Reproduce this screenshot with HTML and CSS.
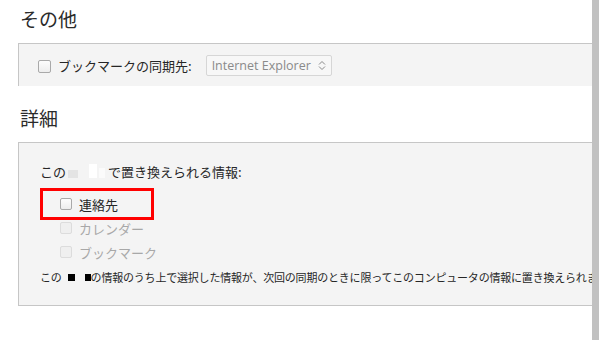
FILE: index.html
```html
<!DOCTYPE html>
<html lang="ja">
<head>
    <meta charset="UTF-8">
    <meta name="viewport" content="width=device-width, initial-scale=1.0">
    <title>同期の設定</title>
    <link rel="stylesheet" href="styles.css">
</head>
<body>
    <div class="page">
        <h2 class="title">その他</h2>
        <div class="box box-other">
            <label class="row-sync">
                <span class="check"></span>
                <span class="label-text">ブックマークの同期先:</span>
                <span class="select">
                    <span class="select-text">Internet Explorer</span>
                    <svg class="chev" width="8" height="11" viewBox="0 0 8 11">
                        <path d="M1 4.5 L4 1.5 L7 4.5 M1 6.5 L4 9.5 L7 6.5" fill="none" stroke="#8a8a8a" stroke-width="1"/>
                    </svg>
                </span>
            </label>
        </div>

        <h2 class="title title-detail">詳細</h2>
        <div class="box box-detail">
            <p class="lead">この<span class="mask"><i class="w1"></i><i class="w2"></i><i class="w3"></i></span>で置き換えられる情報:</p>
            <div class="items">
                <div class="item">
                    <span class="check small"></span>
                    <span>連絡先</span>
                    <span class="highlight"></span>
                </div>
                <div class="item disabled">
                    <span class="check small"></span>
                    <span>カレンダー</span>
                </div>
                <div class="item disabled">
                    <span class="check small"></span>
                    <span>ブックマーク</span>
                </div>
            </div>
            <p class="note">この<span class="dots"><i></i><i></i></span>の情報のうち上で選択した情報が、次回の同期のときに限ってこのコンピュータの情報に置き換えられま</p>
        </div>
    </div>
    <div class="scrollbar"></div>
</body>
</html>
```

FILE: styles.css
```css
body {
    margin: 0;
    width: 599px;
    height: 344px;
    overflow: hidden;
    background-color: #fff;
    font-family: "Noto Sans CJK JP", "Liberation Sans", sans-serif;
    color: #262626;
    position: relative;
}

.page {
    padding-left: 18px;
}

.title {
    margin: 0 0 11px 0;
    padding: 6px 0 0 2px;
    font-size: 19px;
    font-weight: normal;
    line-height: 26px;
    color: #2b2b2b;
}

.title-detail {
    margin-top: 13px;
}

.box {
    background-color: #f4f4f4;
    border-top: 1px solid #c6c6c6;
    border-left: 1px solid #c6c6c6;
    width: 581px;
    padding-left: 21px;
    box-sizing: border-box;
    overflow: hidden;
}

.box-other {
    height: 43px;
    padding-top: 12px;
}

.row-sync {
    display: flex;
    align-items: center;
    height: 20px;
    margin-left: -2px;
    font-size: 13px;
}

.check {
    width: 13px;
    height: 13px;
    box-sizing: border-box;
    border: 1px solid #a9a9a9;
    border-radius: 2px;
    background: linear-gradient(#fdfdfd, #ededed);
    flex: none;
}

.check.small {
    width: 12px;
    height: 12px;
}

.label-text {
    margin-left: 7px;
    line-height: 20px;
}

.select {
    display: flex;
    align-items: center;
    margin-left: 14px;
    width: 126px;
    height: 21px;
    box-sizing: border-box;
    border: 1px solid #d6d6d6;
    border-radius: 2px;
    background-color: #f7f7f7;
    padding-left: 5px;
    margin-top: -2px;
}

.select-text {
    font-family: "Open Sans", "Liberation Sans", sans-serif;
    font-size: 12.5px;
    color: #8a8a8a;
    flex: 1;
}

.chev {
    margin-right: 5px;
}

.box-detail {
    border-bottom: 1px solid #c6c6c6;
    padding-top: 20px;
    padding-bottom: 20px;
}

.lead {
    margin: 0;
    font-size: 13px;
    line-height: 18px;
}

.mask {
    display: inline-block;
    width: 42px;
    height: 16px;
    vertical-align: -3px;
    position: relative;
}

.mask i {
    position: absolute;
    background-color: #fff;
}

.mask .w1 {
    left: 2px;
    top: 6px;
    width: 10px;
    height: 8px;
    background-color: #e4e4e4;
}

.mask .w2 {
    left: 23px;
    top: 0;
    width: 8px;
    height: 14px;
}

.mask .w3 {
    left: 33px;
    top: 4px;
    width: 6px;
    height: 10px;
    background-color: #fbfbfb;
}

.items {
    margin-top: 11px;
}

.item {
    display: flex;
    align-items: center;
    height: 24px;
    padding-left: 20px;
    font-size: 13px;
    position: relative;
}

.item .check {
    margin-right: 7px;
}

.item.disabled {
    color: #a8a8a8;
}

.item.disabled .check {
    border-color: #dcdcdc;
    background: #efefef;
}

.highlight {
    position: absolute;
    left: 0;
    top: -4px;
    width: 114px;
    height: 32px;
    box-sizing: border-box;
    border: 3px solid #ff0000;
}

.note {
    margin: 5px 0 0 0;
    font-size: 11px;
    line-height: 16px;
    letter-spacing: -0.2px;
    white-space: nowrap;
}

.dots {
    display: inline-block;
    width: 29px;
    height: 11px;
    position: relative;
    vertical-align: -1px;
}

.dots i {
    position: absolute;
    top: 2px;
    width: 7px;
    height: 7px;
    background-color: #000;
}

.dots i:first-child {
    left: 6px;
}

.dots i:last-child {
    left: 23px;
    width: 6px;
}

.scrollbar {
    position: absolute;
    right: 0;
    top: 0;
    width: 7px;
    height: 340px;
    background-color: #c1c1c1;
}
```
